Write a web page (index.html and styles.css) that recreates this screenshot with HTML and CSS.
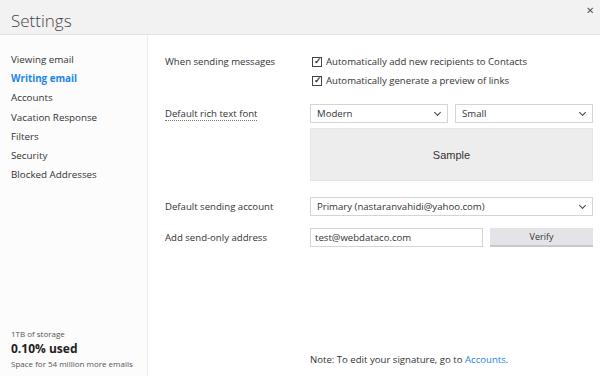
FILE: index.html
```html
<!DOCTYPE html>
<html lang="en">
<head>
    <meta charset="UTF-8">
    <title>Settings</title>
    <link rel="stylesheet" href="styles.css">
</head>
<body>

<header class="topbar">
    <h1>Settings</h1>
    <span class="close">&#x2715;</span>
</header>

<div class="layout">
    <aside class="sidebar">
        <nav class="menu">
            <a href="#">Viewing email</a>
            <a href="#" class="active">Writing email</a>
            <a href="#">Accounts</a>
            <a href="#">Vacation Response</a>
            <a href="#">Filters</a>
            <a href="#">Security</a>
            <a href="#">Blocked Addresses</a>
        </nav>
        <div class="storage">
            <div class="small">1TB of storage</div>
            <div class="used">0.10% used</div>
            <div class="small">Space for 54 million more emails</div>
        </div>
    </aside>

    <main class="content">
        <div class="row">
            <div class="label">When sending messages</div>
            <div class="field checks">
                <label class="check"><span class="box">&#x2713;</span> Automatically add new recipients to Contacts</label>
                <label class="check"><span class="box">&#x2713;</span> Automatically generate a preview of links</label>
            </div>
        </div>

        <div class="row font-row">
            <div class="label"><span class="dotted">Default rich text font</span></div>
            <div class="field">
                <div class="pair">
                    <div class="select">Modern <span class="caret"></span></div>
                    <div class="select">Small <span class="caret"></span></div>
                </div>
                <div class="sample">Sample</div>
            </div>
        </div>

        <div class="row account-row">
            <div class="label">Default sending account</div>
            <div class="field">
                <div class="select">Primary (nastaranvahidi@yahoo.com) <span class="caret"></span></div>
            </div>
        </div>

        <div class="row">
            <div class="label">Add send-only address</div>
            <div class="field pair">
                <div class="input">test@webdataco.com</div>
                <button class="verify">Verify</button>
            </div>
        </div>

        <p class="note">Note: To edit your signature, go to <a href="#">Accounts</a>.</p>
    </main>
</div>

</body>
</html>
```

FILE: styles.css
```css
body {
    margin: 0;
    font-family: "Open Sans", "Noto Sans", sans-serif;
    font-size: 10px;
    color: #333;
    background-color: #fff;
    height: 376px;
    display: flex;
    flex-direction: column;
    overflow: hidden;
}
.topbar {
    height: 35px;
    background-color: #f2f2f2;
    border-bottom: 1px solid #e2e2e2;
    display: flex;
    align-items: center;
    justify-content: space-between;
    padding: 0 6px 0 11px;
    box-sizing: border-box;
}
.topbar h1 {
    margin: 6px 0 0 0;
    font-size: 17px;
    font-weight: 300;
    color: #444;
}
.close {
    align-self: flex-start;
    margin-top: 3px;
    font-size: 10px;
    color: #555;
}
.layout {
    flex: 1;
    display: flex;
}
.sidebar {
    width: 148px;
    border-right: 1px solid #ececec;
    background-color: #fcfcfc;
    display: flex;
    flex-direction: column;
    padding: 15px 0 5px 11px;
    box-sizing: border-box;
}
.menu {
    display: flex;
    flex-direction: column;
}
.menu a {
    color: #333;
    text-decoration: none;
    font-size: 9.8px;
    line-height: 19.2px;
}
.menu a.active {
    color: #1a86e8;
    font-weight: 700;
}
.storage {
    margin-top: auto;
}
.storage .small {
    font-size: 8px;
    color: #555;
    line-height: 14px;
}
.storage .used {
    font-size: 12px;
    font-weight: 700;
    color: #222;
    line-height: 16px;
}
.content {
    flex: 1;
    padding: 17px 7px 3px 17px;
    display: flex;
    flex-direction: column;
    font-size: 9.6px;
}
.row {
    display: grid;
    grid-template-columns: 145px 1fr;
    margin-bottom: 14px;
}
.font-row {
    margin-bottom: 16px;
}
.account-row {
    margin-bottom: 12px;
}
.label {
    line-height: 19px;
}
.dotted {
    border-bottom: 1px dotted #777;
}
.checks {
    display: flex;
    flex-direction: column;
}
.check {
    display: flex;
    align-items: center;
    line-height: 19px;
    margin-left: 2px;
}
.box {
    width: 8px;
    height: 8px;
    border: 1px solid #444;
    font-size: 9px;
    line-height: 6px;
    font-weight: 700;
    text-indent: 1px;
    margin-right: 4px;
}
.pair {
    display: flex;
    gap: 7px;
}
.select {
    flex: 1;
    height: 19px;
    box-sizing: border-box;
    border: 1px solid #d4d4d4;
    background-color: #fff;
    padding: 0 6px;
    line-height: 17px;
    display: flex;
    justify-content: space-between;
    align-items: center;
}
.caret {
    width: 4px;
    height: 4px;
    border-right: 1.5px solid #444;
    border-bottom: 1.5px solid #444;
    transform: rotate(45deg);
    margin: 0 1px 3px 0;
}
.sample {
    margin-top: 5px;
    height: 53px;
    background-color: #ededed;
    border: 1px solid #e6e6e6;
    box-sizing: border-box;
    display: flex;
    align-items: center;
    justify-content: center;
    font-family: "Liberation Sans", Arial, sans-serif;
    font-size: 11px;
}
.input {
    width: 173px;
    height: 19px;
    box-sizing: border-box;
    border: 1px solid #d4d4d4;
    padding: 0 4px;
    line-height: 17px;
}
.verify {
    flex: 1;
    height: 19px;
    border: none;
    border-bottom: 2px solid #c8c8cc;
    background-color: #e4e4e8;
    font-family: inherit;
    font-size: 9px;
    color: #333;
    padding: 0;
}
.note {
    margin: auto 0 7px 0;
    padding-left: 145px;
}
.note a {
    color: #1a86e8;
    text-decoration: none;
}
```
